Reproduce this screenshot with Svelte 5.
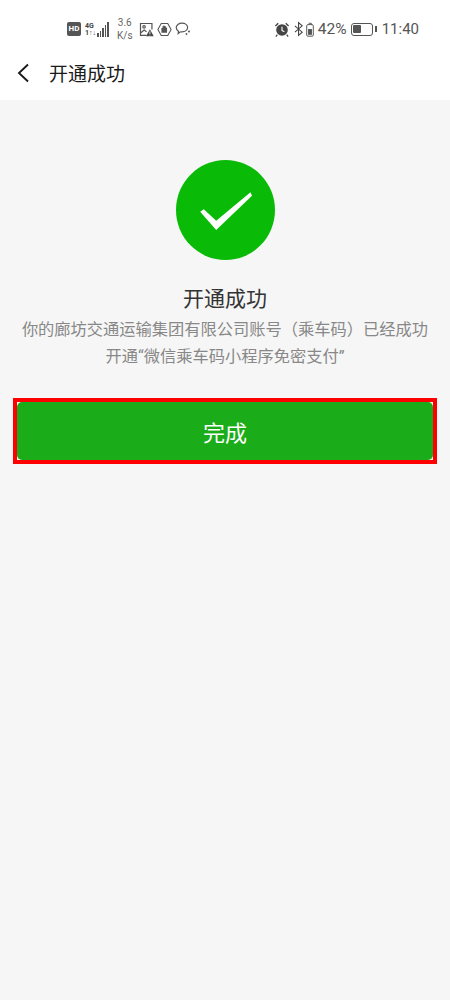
<script>
  const signalBars = [4, 6, 9, 12, 15];
</script>

<div class="page">
  <header class="top">
    <div class="status">
      <div class="status-left">
        <span class="hd">HD</span>
        <div class="net">
          <span class="net-labels"><span>4G</span><span>1↑↓</span></span>
          <span class="bars">
            {#each signalBars as h}
              <i style="height: {h}px"></i>
            {/each}
          </span>
        </div>
        <span class="speed"><span>3.6</span><span>K/s</span></span>
        <svg class="ic" width="15" height="15" viewBox="0 0 16 16" fill="none" stroke="#555" stroke-width="1.3">
          <path d="M8 14.3H1.6V1.6h12.2V8" />
          <circle cx="5.4" cy="5.2" r="1.3" />
          <path d="M2 11.5l3.5-3 2.5 2" />
          <path d="M11.6 7.600l4.100 7.700H7.500z" fill="#444" stroke="none" />
          <path d="M11.600 10v2.800M11.600 13.500v.8" stroke="#fff" stroke-width=".9" />
        </svg>
        <svg class="ic" width="15" height="15" viewBox="0 0 17 16" fill="none" stroke="#555" stroke-width="1.2">
          <path d="M4.800 1.300h7.400L16 8l-3.800 6.700H4.800L1 8z" />
          <path d="M5 11.800V6.400h1.200V4.400h1V3.600h1.200v.5h1.200v.9h1v1.400h.8v5.400z" fill="#555" stroke="none" />
        </svg>
        <svg class="ic" width="16" height="16" viewBox="0 0 16 16" fill="none" stroke="#555" stroke-width="1.2">
          <path d="M7 2.200c3.200 0 5.600 1.900 5.600 4.400 0 2.400-2.400 4.300-5.600 4.300l-2 .1-1.800 1.500.3-2.300C2.300 9.500 1.200 8.200 1.200 6.600c0-2.500 2.600-4.400 5.800-4.400z" />
          <circle cx="14" cy="10.500" r="1" fill="#555" stroke="none" />
          <circle cx="11.500" cy="13" r=".9" fill="#555" stroke="none" />
        </svg>
      </div>
      <div class="status-right">
        <svg class="ic" width="16" height="17" viewBox="0 0 17 17">
          <path d="M1 4.200L4 1.400l1 1.100-3 2.800zM16 4.200L13 1.400l-1 1.100 3 2.800z" fill="#444" />
          <circle cx="8.500" cy="9" r="6.200" fill="#444" />
          <path d="M8.500 5.500V9.500l2.500 1.300" fill="none" stroke="#fff" stroke-width="1.200" />
          <path d="M3.500 14l-1.500 2M13.500 14l1.500 2" stroke="#444" stroke-width="1.300" />
        </svg>
        <svg class="ic bt" width="10" height="16" viewBox="0 0 11 16" fill="none" stroke="#444" stroke-width="1.200">
          <path d="M1 4.500l8 7-4 3.500V1l4 3.500-8 7" />
        </svg>
        <svg class="ic" width="8" height="17" viewBox="0 0 9 17" fill="none" stroke="#555" stroke-width="1.100">
          <path d="M3 1.500h3V3" />
          <rect x=".8" y="3" width="7.400" height="13" rx="1.300" />
          <rect x="2.300" y="8" width="4.400" height="6.500" fill="#555" stroke="none" />
        </svg>
        <span class="pct">42%</span>
        <span class="battery"><span class="level"></span></span>
        <span class="cap"></span>
        <span class="time">11:40</span>
      </div>
    </div>
    <div class="nav">
      <svg class="back" width="14" height="20" viewBox="0 0 14 20" fill="none" stroke="#1a1a1a" stroke-width="1.900">
        <path d="M12 1.500L3 10l9 8.500" />
      </svg>
      <span class="nav-title">开通成功</span>
    </div>
  </header>

  <main class="content">
    <div class="tick">
      <svg width="56" height="40" viewBox="0 0 56 40">
        <polygon fill="#fff" points="3.200,21.700 6.800,19.300 19.200,30.700 53.500,2.300 55,5.700 19.200,40" />
      </svg>
    </div>
    <h1>开通成功</h1>
    <p>你的廊坊交通运输集团有限公司账号（乘车码）已经成功<br />开通“微信乘车码小程序免密支付”</p>
    <div class="outline">
      <button>完成</button>
    </div>
  </main>
</div>

<style>
  :global(body) {
    margin: 0;
    background: #f6f6f6;
  }

  .page {
    width: 450px;
    height: 1000px;
    overflow: hidden;
    background: #f6f6f6;
    font-family: "Noto Sans CJK SC", "Roboto", sans-serif;
  }

  .top {
    height: 100px;
    background: #fff;
  }

  .status {
    height: 50px;
    padding: 8px 31px 0 67px;
    box-sizing: border-box;
    display: flex;
    align-items: center;
    justify-content: space-between;
    color: #555;
  }

  .status-left,
  .status-right {
    display: flex;
    align-items: center;
  }

  .status-left {
    gap: 3px;
  }

  .ic {
    display: block;
    flex: none;
  }

  .hd {
    width: 14px;
    height: 14px;
    border-radius: 2px;
    background: #555;
    color: #fff;
    font: 700 8px/14px "Roboto", sans-serif;
    text-align: center;
  }

  .net {
    display: flex;
    align-items: flex-end;
    gap: 1px;
    margin-left: 1px;
  }

  .net-labels {
    display: flex;
    flex-direction: column;
    font: 700 7px/7px "Roboto", sans-serif;
    color: #444;
  }

  .bars {
    display: flex;
    align-items: flex-end;
    gap: 1px;
  }

  .bars i {
    display: block;
    width: 1.600px;
    background: #555;
  }

  .speed {
    display: flex;
    flex-direction: column;
    align-items: center;
    margin: 0 3px 0 5px;
    font: 400 10px/13px "Roboto", sans-serif;
    color: #666;
  }

  .status-right .bt {
    margin-left: 4px;
  }

  .status-right .ic + .ic:not(.bt) {
    margin-left: 2px;
  }

  .pct {
    margin-left: 4px;
    font: 400 15.500px/18px "Roboto", sans-serif;
  }

  .battery {
    width: 22px;
    height: 13px;
    margin-left: 4px;
    padding: 1.500px;
    box-sizing: border-box;
    border: 1.500px solid #555;
    border-radius: 3px;
  }

  .level {
    display: block;
    width: 45%;
    height: 100%;
    background: #555;
    border-radius: 1px;
  }

  .cap {
    width: 2px;
    height: 6px;
    margin-left: 2px;
    background: #555;
  }

  .time {
    margin-left: 5px;
    font: 400 15px/18px "Roboto", sans-serif;
  }

  .nav {
    height: 50px;
    display: flex;
    align-items: center;
    padding: 0 0 4px 16px;
    box-sizing: border-box;
  }

  .back {
    display: block;
  }

  .nav-title {
    margin-left: 19px;
    font-size: 19px;
    line-height: 26px;
    color: #1a1a1a;
  }

  .content {
    display: flex;
    flex-direction: column;
    align-items: center;
    padding: 60px 13px 0;
  }

  .tick {
    width: 99px;
    height: 100px;
    border-radius: 50%;
    background: #09bb07;
    display: flex;
    align-items: center;
    justify-content: center;
  }

  h1 {
    margin: 22px 0 0;
    font-size: 21px;
    font-weight: 400;
    line-height: 30px;
    color: #333;
  }

  p {
    margin: 5px 0 0;
    font-family: "Roboto", "Noto Sans CJK SC", sans-serif;
    font-size: 16.250px;
    line-height: 26.500px;
    text-align: center;
    white-space: nowrap;
    color: #888;
  }

  .outline {
    width: 424px;
    height: 66px;
    margin-top: 28px;
    box-sizing: border-box;
    border: 4px solid #f00;
    background: #fff;
  }

  button {
    display: block;
    width: 100%;
    height: 100%;
    padding: 0;
    border: 0;
    border-radius: 5px;
    background: #1aad19;
    color: #fff;
    font: inherit;
    font-size: 22px;
  }
</style>
